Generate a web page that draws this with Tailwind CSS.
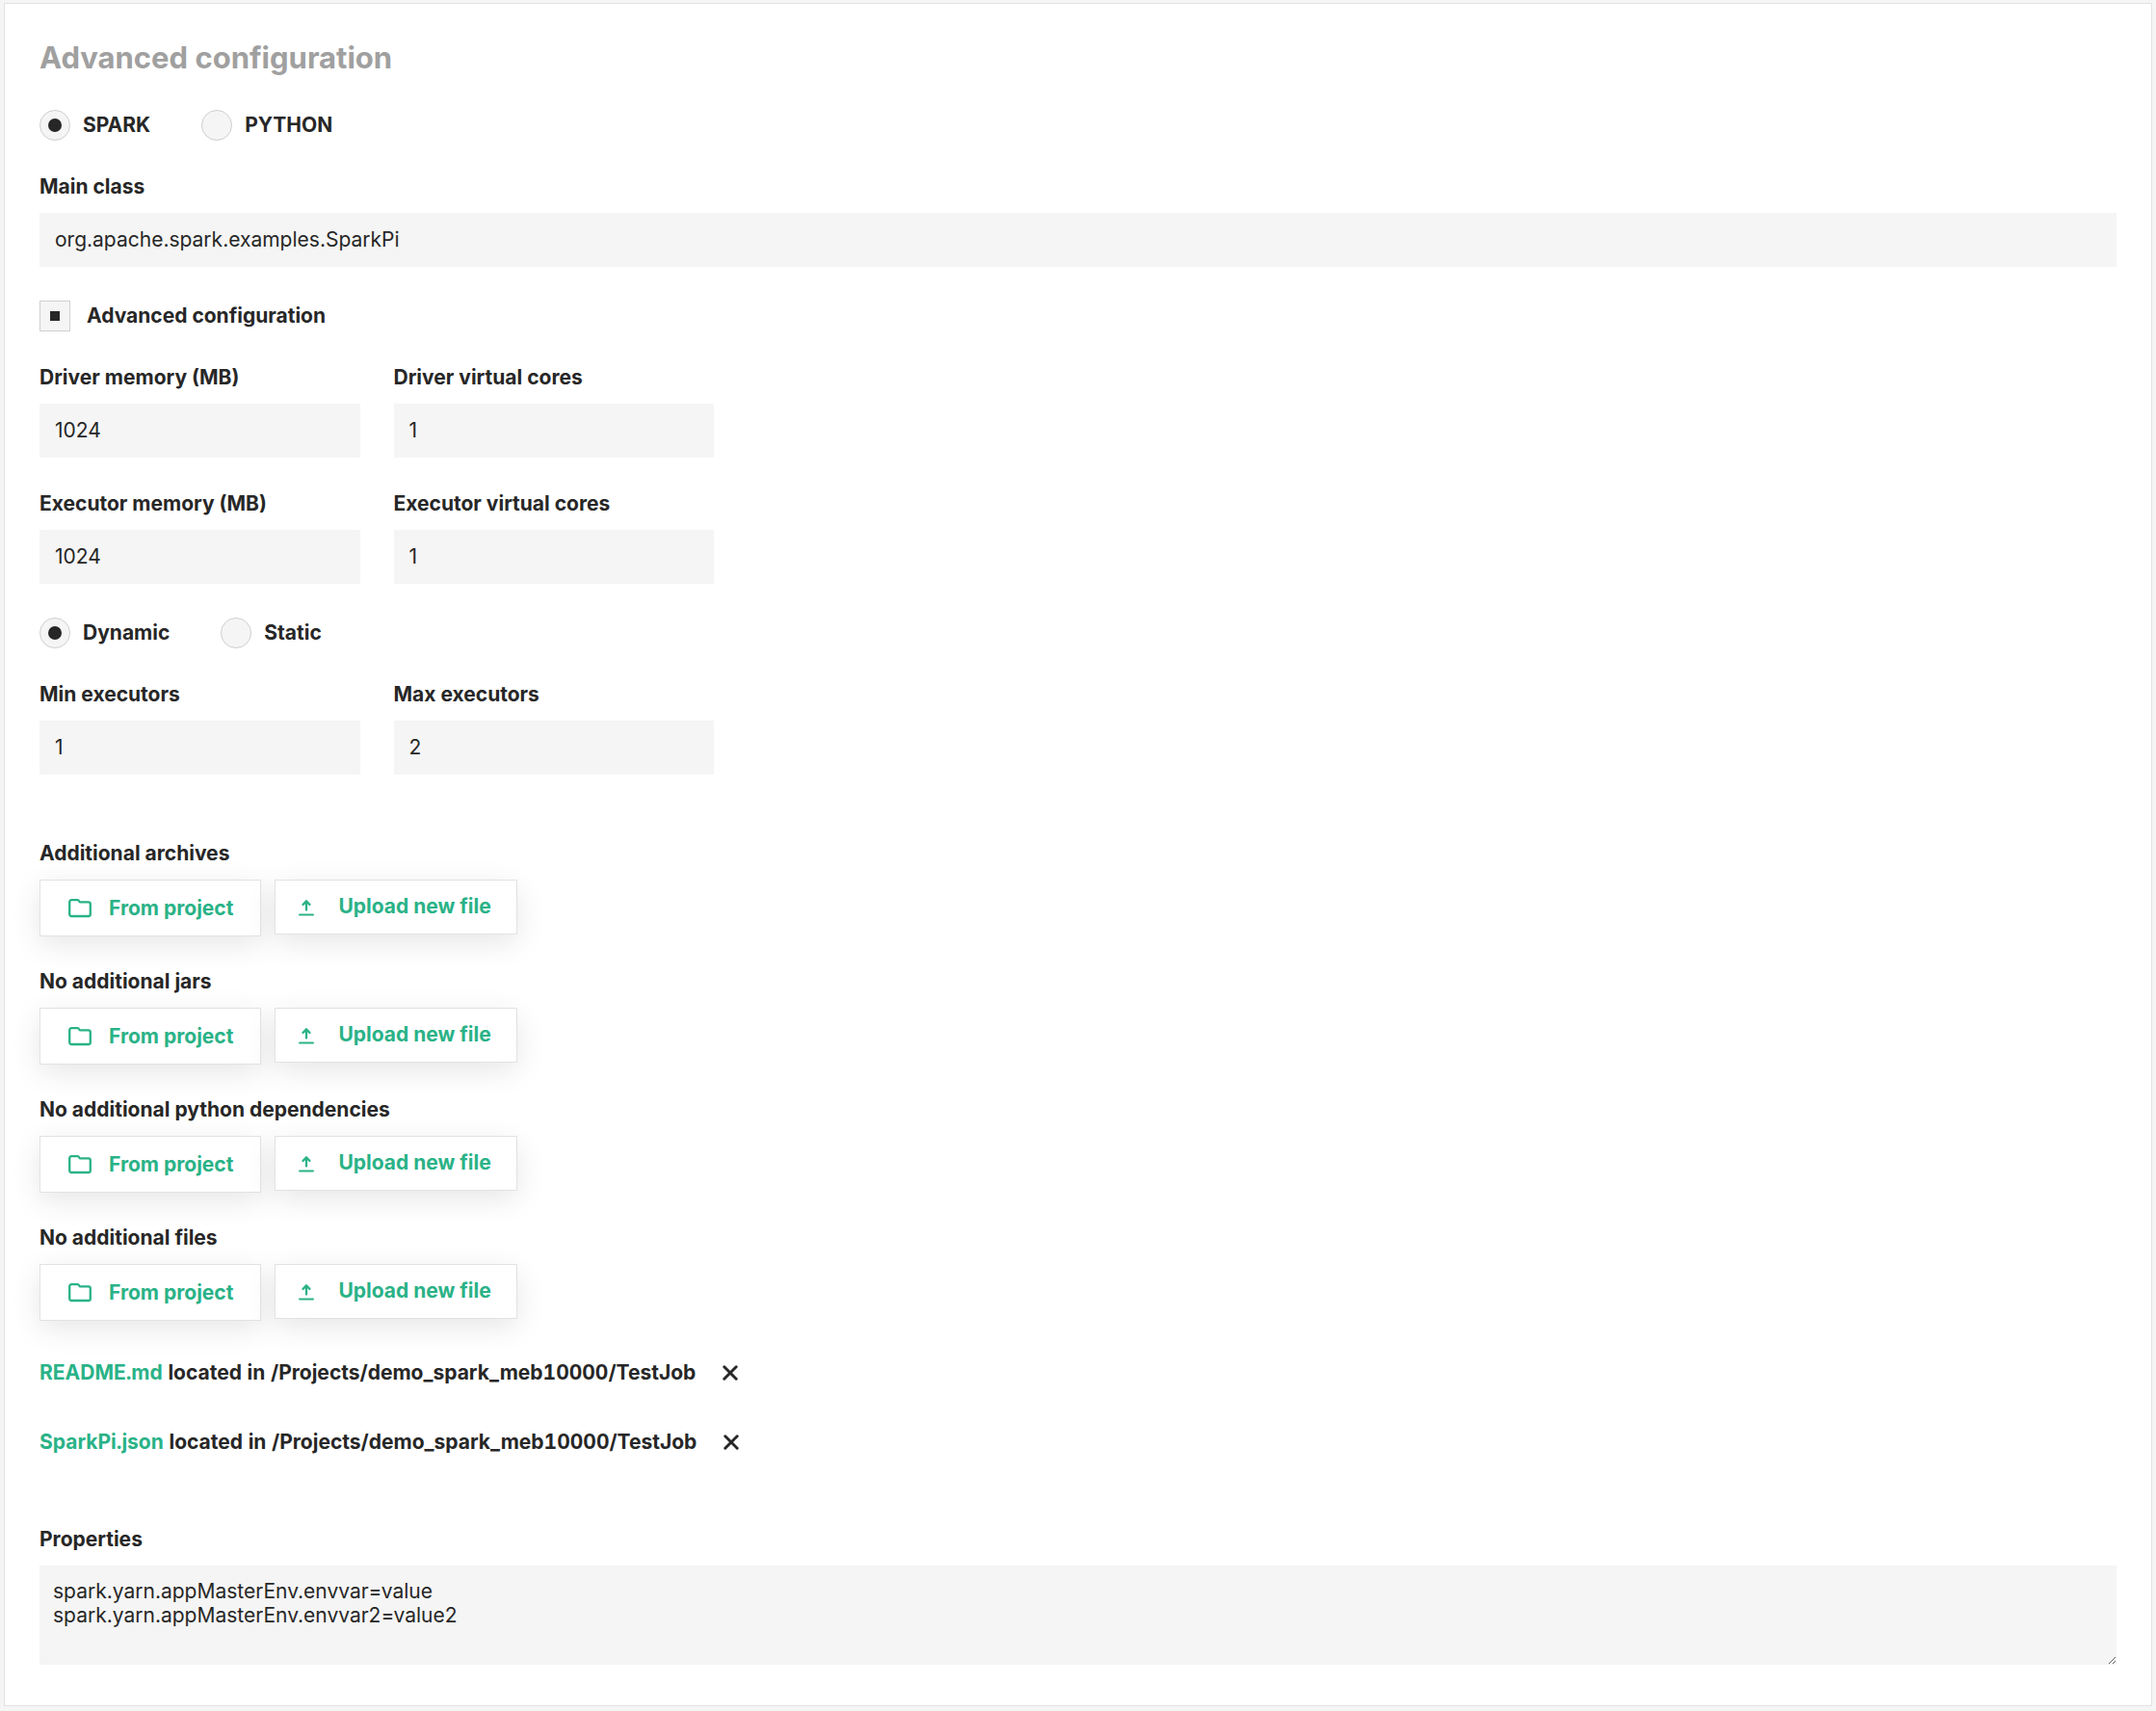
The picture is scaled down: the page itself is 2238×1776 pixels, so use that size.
<!DOCTYPE html>
<html lang="en">
<head>
    <meta charset="UTF-8">
    <meta name="viewport" content="width=device-width, initial-scale=1.0">
    <title>Advanced configuration</title>
    <script src="https://cdn.jsdelivr.net/npm/@tailwindcss/browser@4"></script>
</head>
<body class="bg-[#f5f5f5] px-1 py-[3px] font-['Inter',sans-serif] text-[21px] leading-[26px] text-[#272727]">

    <!-- shared icons -->
    <svg class="hidden">
        <symbol id="icon-folder" viewBox="0 0 24 20">
            <path d="M1.2 4V3.2A2 2 0 0 1 3.2 1.2H9.6Q10.8 1.4 11.4 2.9Q11.6 3.4 12.4 3.4H20.8A2 2 0 0 1 22.8 5.4V16A2 2 0 0 1 20.8 18H3.2A2 2 0 0 1 1.2 16Z" fill="none" stroke="currentColor" stroke-width="2.3" stroke-linejoin="round" />
        </symbol>
        <symbol id="icon-upload" viewBox="0 0 16 18">
            <path d="M8 11.5V2.4M4.5 6L8 2.4L11.5 6" fill="none" stroke="currentColor" stroke-width="2.3" stroke-linecap="round" stroke-linejoin="round" />
            <path d="M1 16.5H15" fill="none" stroke="currentColor" stroke-width="2" stroke-linecap="round" />
        </symbol>
        <symbol id="icon-close" viewBox="0 0 16 16">
            <path d="M1.8 1.8L14.2 14.2M14.2 1.8L1.8 14.2" fill="none" stroke="currentColor" stroke-width="3" stroke-linecap="round" />
        </symbol>
    </svg>

    <form class="border border-[#e2e2e2] bg-white px-9 pt-9 pb-[42px]">
        <h1 class="text-[31px] leading-10 font-bold text-[#a0a0a0]">Advanced configuration</h1>

        <div class="mt-[34px] flex gap-[53px] font-bold">
            <label class="flex items-center gap-[13px]">
                <input type="radio" name="type" checked class="grid size-8 appearance-none place-items-center rounded-full border border-[#cfcfcf] bg-[#f5f5f5] checked:before:size-3.5 checked:before:rounded-full checked:before:bg-[#272727] checked:before:content-['']">
                SPARK
            </label>
            <label class="flex items-center gap-[13px]">
                <input type="radio" name="type" class="grid size-8 appearance-none place-items-center rounded-full border border-[#cfcfcf] bg-[#f5f5f5] checked:before:size-3.5 checked:before:rounded-full checked:before:bg-[#272727] checked:before:content-['']">
                PYTHON
            </label>
        </div>

        <div class="mt-[35px]">
            <label for="main-class" class="block font-bold">Main class</label>
            <input type="text" id="main-class" value="org.apache.spark.examples.SparkPi" class="mt-3.5 block h-14 w-full bg-[#f5f5f5] px-4 pb-0.5">
        </div>

        <label class="mt-[35px] flex w-fit items-center gap-[17px] font-bold">
            <input type="checkbox" checked class="grid size-8 appearance-none place-items-center border border-[#cfcfcf] bg-[#f5f5f5] checked:before:size-2.5 checked:before:bg-[#272727] checked:before:content-['']">
            Advanced configuration
        </label>

        <div class="mt-[35px] grid max-w-[700px] grid-cols-2 gap-[35px]">
            <div>
                <label for="driver-memory" class="block font-bold">Driver memory (MB)</label>
                <input type="text" id="driver-memory" value="1024" class="mt-3.5 block h-14 w-full bg-[#f5f5f5] px-4 pb-0.5">
            </div>
            <div>
                <label for="driver-cores" class="block font-bold">Driver virtual cores</label>
                <input type="text" id="driver-cores" value="1" class="mt-3.5 block h-14 w-full bg-[#f5f5f5] px-4 pb-0.5">
            </div>
            <div>
                <label for="executor-memory" class="block font-bold">Executor memory (MB)</label>
                <input type="text" id="executor-memory" value="1024" class="mt-3.5 block h-14 w-full bg-[#f5f5f5] px-4 pb-0.5">
            </div>
            <div>
                <label for="executor-cores" class="block font-bold">Executor virtual cores</label>
                <input type="text" id="executor-cores" value="1" class="mt-3.5 block h-14 w-full bg-[#f5f5f5] px-4 pb-0.5">
            </div>
        </div>

        <div class="mt-[35px] flex gap-[53px] font-bold">
            <label class="flex items-center gap-[13px]">
                <input type="radio" name="allocation" checked class="grid size-8 appearance-none place-items-center rounded-full border border-[#cfcfcf] bg-[#f5f5f5] checked:before:size-3.5 checked:before:rounded-full checked:before:bg-[#272727] checked:before:content-['']">
                Dynamic
            </label>
            <label class="flex items-center gap-[13px]">
                <input type="radio" name="allocation" class="grid size-8 appearance-none place-items-center rounded-full border border-[#cfcfcf] bg-[#f5f5f5] checked:before:size-3.5 checked:before:rounded-full checked:before:bg-[#272727] checked:before:content-['']">
                Static
            </label>
        </div>

        <div class="mt-[35px] grid max-w-[700px] grid-cols-2 gap-[35px]">
            <div>
                <label for="min-executors" class="block font-bold">Min executors</label>
                <input type="text" id="min-executors" value="1" class="mt-3.5 block h-14 w-full bg-[#f5f5f5] px-4 pb-0.5">
            </div>
            <div>
                <label for="max-executors" class="block font-bold">Max executors</label>
                <input type="text" id="max-executors" value="2" class="mt-3.5 block h-14 w-full bg-[#f5f5f5] px-4 pb-0.5">
            </div>
        </div>

        <div class="mt-[69px] flex flex-col gap-[34px] font-bold">
            <section>
                <h2>Additional archives</h2>
                <div class="mt-3.5 flex items-start gap-3.5 text-[#2ab287]">
                    <button type="button" class="flex h-[59px] items-center gap-[18px] border border-[#e2e2e2] bg-white pr-7 pl-[29px] shadow-[0_8px_30px_rgba(0,0,0,0.1)]">
                        <svg class="h-5 w-6"><use href="#icon-folder" /></svg>
                        From project
                    </button>
                    <button type="button" class="flex h-[57px] items-center gap-[25px] border border-[#e2e2e2] bg-white pr-[26px] pl-6 shadow-[0_8px_30px_rgba(0,0,0,0.1)]">
                        <svg class="h-[18px] w-4"><use href="#icon-upload" /></svg>
                        <span class="pb-0.5">Upload new file</span>
                    </button>
                </div>
            </section>
            <section>
                <h2>No additional jars</h2>
                <div class="mt-3.5 flex items-start gap-3.5 text-[#2ab287]">
                    <button type="button" class="flex h-[59px] items-center gap-[18px] border border-[#e2e2e2] bg-white pr-7 pl-[29px] shadow-[0_8px_30px_rgba(0,0,0,0.1)]">
                        <svg class="h-5 w-6"><use href="#icon-folder" /></svg>
                        From project
                    </button>
                    <button type="button" class="flex h-[57px] items-center gap-[25px] border border-[#e2e2e2] bg-white pr-[26px] pl-6 shadow-[0_8px_30px_rgba(0,0,0,0.1)]">
                        <svg class="h-[18px] w-4"><use href="#icon-upload" /></svg>
                        <span class="pb-0.5">Upload new file</span>
                    </button>
                </div>
            </section>
            <section>
                <h2>No additional python dependencies</h2>
                <div class="mt-3.5 flex items-start gap-3.5 text-[#2ab287]">
                    <button type="button" class="flex h-[59px] items-center gap-[18px] border border-[#e2e2e2] bg-white pr-7 pl-[29px] shadow-[0_8px_30px_rgba(0,0,0,0.1)]">
                        <svg class="h-5 w-6"><use href="#icon-folder" /></svg>
                        From project
                    </button>
                    <button type="button" class="flex h-[57px] items-center gap-[25px] border border-[#e2e2e2] bg-white pr-[26px] pl-6 shadow-[0_8px_30px_rgba(0,0,0,0.1)]">
                        <svg class="h-[18px] w-4"><use href="#icon-upload" /></svg>
                        <span class="pb-0.5">Upload new file</span>
                    </button>
                </div>
            </section>
            <section>
                <h2>No additional files</h2>
                <div class="mt-3.5 flex items-start gap-3.5 text-[#2ab287]">
                    <button type="button" class="flex h-[59px] items-center gap-[18px] border border-[#e2e2e2] bg-white pr-7 pl-[29px] shadow-[0_8px_30px_rgba(0,0,0,0.1)]">
                        <svg class="h-5 w-6"><use href="#icon-folder" /></svg>
                        From project
                    </button>
                    <button type="button" class="flex h-[57px] items-center gap-[25px] border border-[#e2e2e2] bg-white pr-[26px] pl-6 shadow-[0_8px_30px_rgba(0,0,0,0.1)]">
                        <svg class="h-[18px] w-4"><use href="#icon-upload" /></svg>
                        <span class="pb-0.5">Upload new file</span>
                    </button>
                </div>
            </section>
        </div>

        <ul class="mt-[41px] flex flex-col gap-[46px] font-bold tabular-nums">
            <li class="flex items-center gap-7">
                <p><a href="#" class="text-[#2ab287]">README.md</a> located in /Projects/demo_spark_meb10000/TestJob</p>
                <button type="button" aria-label="Remove README.md">
                    <svg class="size-4"><use href="#icon-close" /></svg>
                </button>
            </li>
            <li class="flex items-center gap-7">
                <p><a href="#" class="text-[#2ab287]">SparkPi.json</a> located in /Projects/demo_spark_meb10000/TestJob</p>
                <button type="button" aria-label="Remove SparkPi.json">
                    <svg class="size-4"><use href="#icon-close" /></svg>
                </button>
            </li>
        </ul>

        <div class="mt-[75px]">
            <label for="properties" class="block font-bold">Properties</label>
            <textarea id="properties" class="mt-3.5 block h-[103px] w-full bg-[#f5f5f5] px-3.5 py-3.5 leading-[25px]">spark.yarn.appMasterEnv.envvar=value
spark.yarn.appMasterEnv.envvar2=value2</textarea>
        </div>
    </form>

</body>
</html>
